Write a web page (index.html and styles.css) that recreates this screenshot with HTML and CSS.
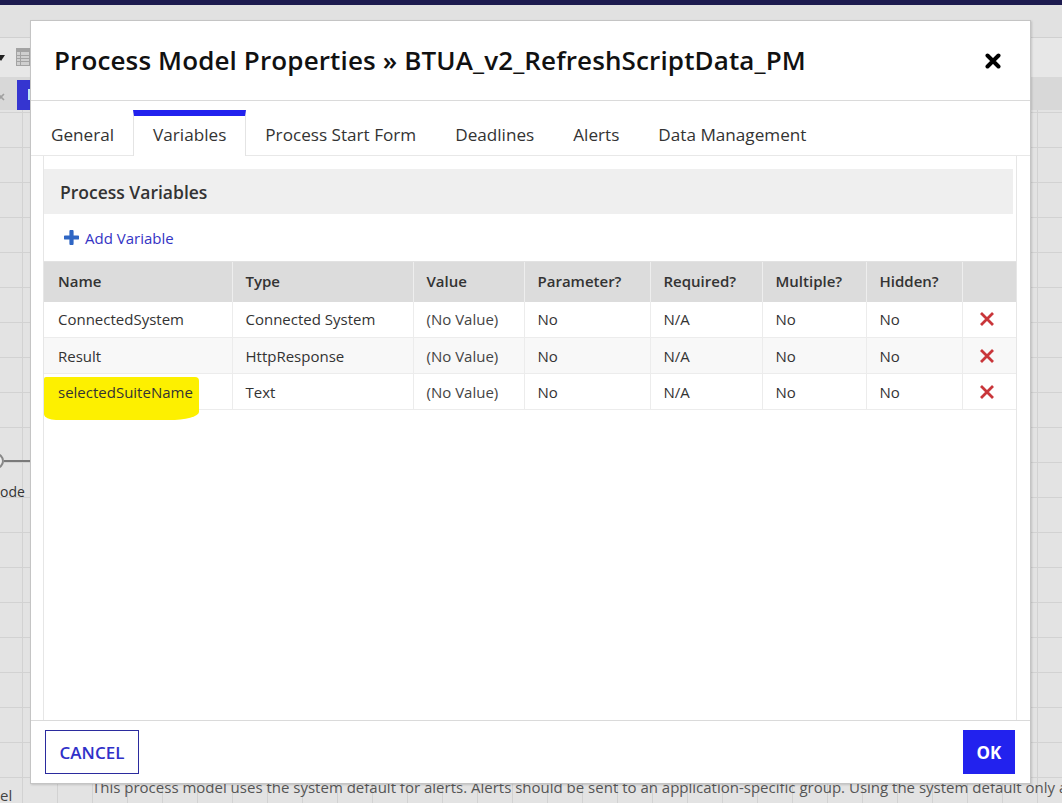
FILE: index.html
```html
<!DOCTYPE html>
<html>
<head>
<meta charset="utf-8">
<link rel="stylesheet" href="styles.css">
</head>
<body>
<div class="page">
  <div class="topbar"></div>
  <div class="band"></div>
  <div class="toolbar">
    <span class="caret"></span>
    <svg class="listicon" width="14" height="18" viewBox="0 0 14 18"><rect x="0" y="0" width="14" height="18" fill="#a3a3a3"/><rect x="1" y="4" width="12" height="13" fill="#cfcfcf"/><rect x="1" y="7" width="12" height="1" fill="#a3a3a3"/><rect x="1" y="10" width="12" height="1" fill="#a3a3a3"/><rect x="1" y="13" width="12" height="1" fill="#a3a3a3"/><rect x="4" y="4" width="1" height="13" fill="#a3a3a3"/></svg>
  </div>
  <div class="bar2">
    <svg class="xmark" width="6" height="8" viewBox="0 0 6 8"><path d="M-2 1 L4 7 M4 1 L-2 7" stroke="#a0a0a0" stroke-width="1.6"/></svg>
    <span class="bluebtn"><span class="bluebtn-in"></span></span>
  </div>
  <div class="canvas">
    <div class="node"><span class="node-circle"></span><span class="node-line"></span></div>
    <div class="node-label">ode</div>
    <div class="note">This process model uses the system default for alerts. Alerts should be sent to an application-specific group. Using the system default only alerts<br>administrators and not an administrators group with different requirements.</div>
    <div class="left-label">el</div>
  </div>
</div>

<div class="modal">
  <div class="modal-header">
    <h1 class="modal-title">Process Model Properties » BTUA_v2_RefreshScriptData_PM</h1>
    <svg class="close" width="16" height="16" viewBox="0 0 16 16"><path d="M2.5 2.5 L13.5 13.5 M13.5 2.5 L2.5 13.5" stroke="#000" stroke-width="4" stroke-linecap="round"/></svg>
  </div>
  <div class="tabs">
    <div class="tab">General</div>
    <div class="tab active">Variables</div>
    <div class="tab">Process Start Form</div>
    <div class="tab">Deadlines</div>
    <div class="tab">Alerts</div>
    <div class="tab">Data Management</div>
  </div>
  <div class="modal-body">
    <div class="frame">
      <div class="section-head">Process Variables</div>
      <div class="add-row">
        <svg class="plus" width="15" height="15" viewBox="0 0 15 15"><path d="M7.5 1.5 V13.5 M1.5 7.5 H13.5" stroke="#2f66c4" stroke-width="4.2" stroke-linecap="round"/></svg>
        <span class="add-link">Add Variable</span>
      </div>
      <table class="vars">
        <colgroup>
          <col class="c-name"><col class="c-type"><col class="c-value"><col class="c-param"><col class="c-req"><col class="c-mult"><col class="c-hid"><col class="c-del">
        </colgroup>
        <thead>
          <tr><th>Name</th><th>Type</th><th>Value</th><th>Parameter?</th><th>Required?</th><th>Multiple?</th><th>Hidden?</th><th></th></tr>
        </thead>
        <tbody>
          <tr><td>ConnectedSystem</td><td>Connected System</td><td class="nv">(No Value)</td><td>No</td><td>N/A</td><td>No</td><td>No</td><td class="del"><svg width="16" height="16" viewBox="0 0 16 16"><path d="M2 2 L14 14 M14 2 L2 14" stroke="#c9363a" stroke-width="2.8"/></svg></td></tr>
          <tr class="alt"><td>Result</td><td>HttpResponse</td><td class="nv">(No Value)</td><td>No</td><td>N/A</td><td>No</td><td>No</td><td class="del"><svg width="16" height="16" viewBox="0 0 16 16"><path d="M2 2 L14 14 M14 2 L2 14" stroke="#c9363a" stroke-width="2.8"/></svg></td></tr>
          <tr><td class="hl-cell"><span class="highlight"></span><span class="hl-text">selectedSuiteName</span></td><td>Text</td><td class="nv">(No Value)</td><td>No</td><td>N/A</td><td>No</td><td>No</td><td class="del"><svg width="16" height="16" viewBox="0 0 16 16"><path d="M2 2 L14 14 M14 2 L2 14" stroke="#c9363a" stroke-width="2.8"/></svg></td></tr>
        </tbody>
      </table>
    </div>
  </div>
  <div class="modal-footer">
    <button class="btn-cancel">CANCEL</button>
    <button class="btn-ok">OK</button>
  </div>
</div>
</body>
</html>
```
FILE: styles.css
```css
* { box-sizing: border-box; }
html, body { margin: 0; padding: 0; }
body {
  width: 1062px;
  height: 803px;
  overflow: hidden;
  font-family: "Open Sans", "Noto Sans", sans-serif;
  color: #333;
  background: #e3e3e3;
  position: relative;
}
.page {
  display: flex;
  flex-direction: column;
  height: 803px;
}
.topbar { height: 5px; background: #1d1b4f; }
.band { height: 33px; background: #e1e1e1; border-bottom: 1px solid #d0d0d0; }
.toolbar {
  height: 40px;
  background: #e7e7e7;
  display: flex;
  align-items: center;
  gap: 11px;
  border-bottom: 1px solid #d8d8d8;
}
.caret {
  width: 0; height: 0;
  border-left: 4px solid transparent;
  border-right: 4px solid transparent;
  border-top: 6px solid #222;
  margin-left: -3px;
}
.listicon { margin-top: -2px; }
.bar2 {
  height: 32px;
  background: #d8d8d8;
  display: flex;
  align-items: center;
  gap: 11px;
}
.xmark { display: block; margin-top: 6px; }
.bluebtn {
  width: 15px; height: 30px;
  margin-top: 2px;
  background: #3535d0;
  position: relative;
  display: block;
}
.bluebtn-in {
  position: absolute;
  right: 0; top: 9px;
  width: 4px; height: 11px;
  background: #bfe8f5;
}
.canvas {
  flex: 1;
  position: relative;
  background-color: #e3e3e3;
  background-image:
    linear-gradient(to right, #d2d2d2 1px, transparent 1px),
    linear-gradient(to bottom, #d2d2d2 1px, transparent 1px);
  background-size: 35px 35px;
  background-position: 22px 2px;
}
.node { position: absolute; left: -12px; top: 343px; display: flex; align-items: center; }
.node-circle {
  width: 16px; height: 16px; border-radius: 50%;
  border: 2px solid #888; background: #eee;
}
.node-line { width: 30px; height: 2px; background: #7a7a7a; }
.node-label { position: absolute; left: 0; top: 372px; font-size: 14px; color: #333; }
.note {
  position: absolute;
  left: 92px; top: 667px;
  width: 970px;
  overflow: hidden;
  font-size: 15px;
  line-height: 21px;
  color: #555;
  white-space: nowrap;
}
.left-label { position: absolute; left: 0; top: 675px; font-size: 15px; color: #444; }

/* modal */
.modal {
  position: absolute;
  left: 30px; top: 20px;
  width: 1001px; height: 764px;
  background: #fff;
  border: 1px solid #c4c4c4;
  box-shadow: 1px 1px 2px rgba(0,0,0,0.15);
  display: flex;
  flex-direction: column;
}
.modal-header {
  height: 80px;
  flex: none;
  border-bottom: 1px solid #dadada;
  display: flex;
  align-items: center;
  justify-content: space-between;
  padding: 0 29px 0 23px;
}
.modal-title {
  margin: 0;
  font-size: 26px;
  font-weight: 600;
  color: #111;
  letter-spacing: 0.13px;
  padding-bottom: 1px;
}
.close { margin-top: 1px; }
.tabs {
  height: 55px;
  flex: none;
  display: flex;
  align-items: flex-end;
  border-bottom: 1px solid #e8e8e8;
}
.tab {
  height: 46px;
  margin-bottom: -1px;
  padding: 0 19px 4px;
  font-size: 17.15px;
  color: #333;
  display: flex;
  align-items: center;
  border-top: 6px solid transparent;
  border-left: 1px solid transparent;
  border-right: 1px solid transparent;
  margin-left: -1px;
}
.tab:first-child { margin-left: 0; }
.tab.active {
  background: #fff;
  border-top-color: #2222ee;
  border-left-color: #e4e4e4;
  border-right-color: #e4e4e4;
}
.modal-body {
  flex: 1;
  padding: 0 13px 0 12px;
  display: flex;
  min-height: 0;
}
.frame {
  flex: 1;
  border-left: 1px solid #e6e6e6;
  border-right: 1px solid #e6e6e6;
  padding-top: 13px;
}
.section-head {
  height: 45px;
  margin-right: 3px;
  background: #efefef;
  font-size: 17.5px;
  font-weight: 600;
  color: #333;
  display: flex;
  align-items: center;
  padding-left: 16px;
}
.add-row {
  height: 47px;
  display: flex;
  align-items: center;
  padding-left: 20px;
  gap: 6px;
}
.add-link { font-size: 15px; color: #3434c4; }
.vars {
  border-collapse: collapse;
  table-layout: fixed;
  width: 972px;
  font-size: 15px;
}
.c-name { width: 188px; }
.c-type { width: 181px; }
.c-value { width: 111px; }
.c-param { width: 126px; }
.c-req { width: 112px; }
.c-mult { width: 104px; }
.c-hid { width: 96px; }
.c-del { width: 54px; }
.vars th {
  height: 40px;
  background: #dcdcdc;
  font-weight: 600;
  text-align: left;
  color: #333;
  padding: 0 0 1px 13px;
  border-left: 1px solid #eeeeee;
  border-top: 1px solid #e2e2e2;
}
.vars th:first-child { border-left: none; padding-left: 14px; }
.vars td {
  height: 36px;
  padding: 0 0 0 13px;
  color: #333;
  border-left: 1px solid #ececec;
  border-bottom: 1px solid #ececec;
  white-space: nowrap;
}
.vars td.nv { color: #444; }
.vars td:first-child { border-left: none; padding-left: 14px; }
.vars tr.alt td { background: #f8f8f8; }
.vars td.del { padding: 0 0 0 16px; }
.vars td.del svg { display: block; }
.hl-cell { position: relative; }
.highlight {
  position: absolute;
  left: 0; top: 3px;
  width: 155px; height: 43px;
  background: #fdf000;
  border-radius: 2px 4px 30px 12px / 2px 4px 8px 6px;
  z-index: 0;
}
.hl-text { position: relative; z-index: 1; }
.modal-footer {
  height: 63px;
  flex: none;
  border-top: 1px solid #dadada;
  display: flex;
  align-items: center;
  justify-content: space-between;
  padding: 0 15px 0 14px;
}
.btn-cancel {
  height: 44px;
  width: 94px;
  background: #fff;
  border: 1px solid #2b2b9e;
  color: #3030c8;
  font-family: "Open Sans", sans-serif;
  font-size: 17px;
  font-weight: 600;
  padding: 0;
  margin: 0;
}
.btn-ok {
  height: 44px;
  width: 52px;
  background: #2222ee;
  border: none;
  color: #fff;
  font-family: "Open Sans", sans-serif;
  font-size: 17px;
  font-weight: 700;
  padding: 0;
  margin: 0;
}
```
